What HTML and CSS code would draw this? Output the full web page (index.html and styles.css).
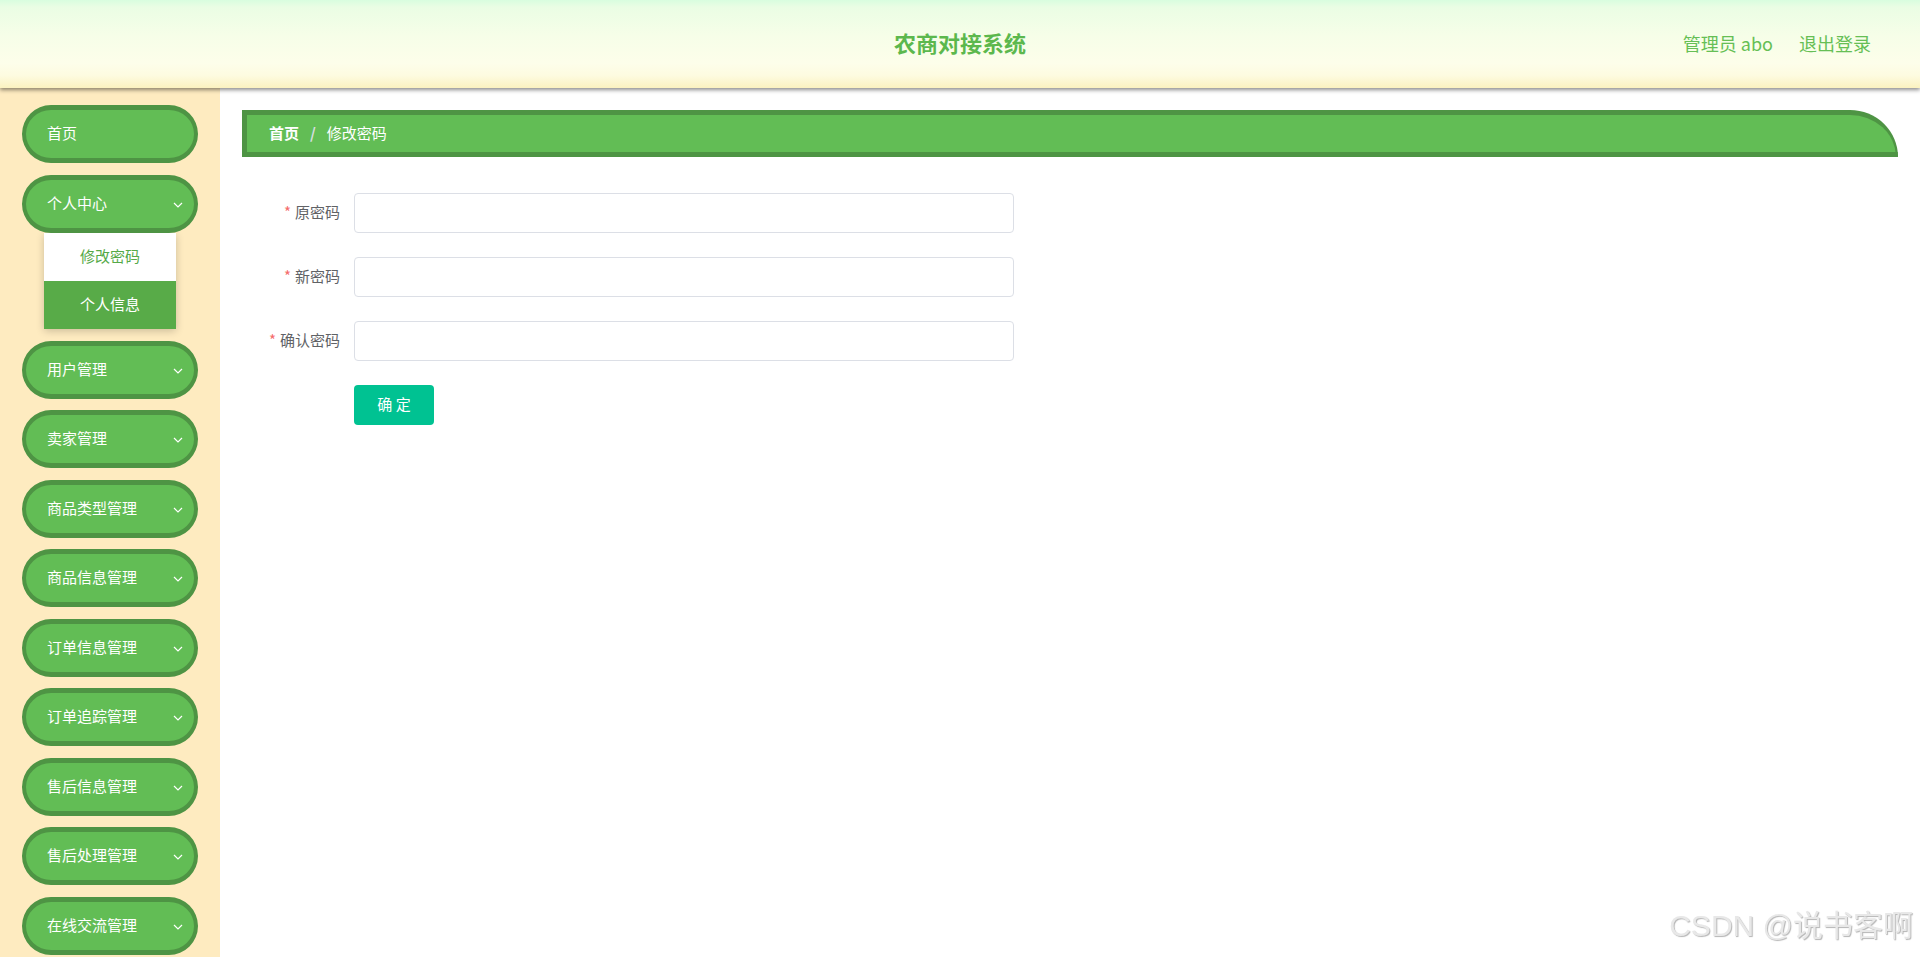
FILE: index.html
```html
<!DOCTYPE html>
<html lang="zh-CN">
<head>
  <meta charset="UTF-8">
  <meta name="viewport" content="width=device-width, initial-scale=1.0">
  <title>农商对接系统</title>
  <link rel="stylesheet" href="styles.css">
</head>
<body>
  <header class="topbar">
    <div></div>
    <h1 class="topbar-title">农商对接系统</h1>
    <div class="topbar-user">
      <span>管理员 abo</span>
      <span class="logout">退出登录</span>
    </div>
  </header>

  <div class="layout">
    <!-- Side menu -->
    <aside class="sidebar">
      <div class="menu-btn">首页</div>

      <div class="menu-btn">个人中心
        <svg class="arrow" viewBox="0 0 10 6"><polyline points="1,1 5,5 9,1"/></svg>
      </div>
      <div class="submenu">
        <div class="submenu-item active">修改密码</div>
        <div class="submenu-item">个人信息</div>
      </div>

      <div class="menu-btn">用户管理
        <svg class="arrow" viewBox="0 0 10 6"><polyline points="1,1 5,5 9,1"/></svg>
      </div>
      <div class="menu-btn">卖家管理
        <svg class="arrow" viewBox="0 0 10 6"><polyline points="1,1 5,5 9,1"/></svg>
      </div>
      <div class="menu-btn">商品类型管理
        <svg class="arrow" viewBox="0 0 10 6"><polyline points="1,1 5,5 9,1"/></svg>
      </div>
      <div class="menu-btn">商品信息管理
        <svg class="arrow" viewBox="0 0 10 6"><polyline points="1,1 5,5 9,1"/></svg>
      </div>
      <div class="menu-btn">订单信息管理
        <svg class="arrow" viewBox="0 0 10 6"><polyline points="1,1 5,5 9,1"/></svg>
      </div>
      <div class="menu-btn">订单追踪管理
        <svg class="arrow" viewBox="0 0 10 6"><polyline points="1,1 5,5 9,1"/></svg>
      </div>
      <div class="menu-btn">售后信息管理
        <svg class="arrow" viewBox="0 0 10 6"><polyline points="1,1 5,5 9,1"/></svg>
      </div>
      <div class="menu-btn">售后处理管理
        <svg class="arrow" viewBox="0 0 10 6"><polyline points="1,1 5,5 9,1"/></svg>
      </div>
      <div class="menu-btn">在线交流管理
        <svg class="arrow" viewBox="0 0 10 6"><polyline points="1,1 5,5 9,1"/></svg>
      </div>
    </aside>

    <!-- Main content -->
    <main class="content">
      <div class="breadcrumb">
        <span class="crumb-home">首页</span>
        <span class="crumb-sep">/</span>
        <span class="crumb-current">修改密码</span>
      </div>

      <form class="pwd-form">
        <div class="form-item">
          <label class="form-label"><span class="required">*</span>原密码</label>
          <input class="form-input" type="password">
        </div>
        <div class="form-item">
          <label class="form-label"><span class="required">*</span>新密码</label>
          <input class="form-input" type="password">
        </div>
        <div class="form-item">
          <label class="form-label"><span class="required">*</span>确认密码</label>
          <input class="form-input" type="password">
        </div>
        <div class="form-actions">
          <button class="submit-btn" type="button">确 定</button>
        </div>
      </form>
    </main>
  </div>

  <div class="watermark">CSDN @说书客啊</div>
</body>
</html>
```

FILE: styles.css
```css
/* Global Styles */
body {
  font-family: "Noto Sans CJK SC", "Liberation Sans", sans-serif;
  margin: 0;
  padding: 0;
  background: #fff;
}

/* Header Styles */
.topbar {
  position: relative;
  z-index: 2;
  height: 88px;
  display: grid;
  grid-template-columns: 1fr auto 1fr;
  align-items: center;
  background: linear-gradient(to bottom, #d8fddf 0%, #eafde4 8%, #f6fee8 40%, #fdfeea 72%, #fdfbe0 86%, #fbf2c0 100%);
  box-shadow: 0 2px 4px rgba(0, 0, 0, 0.45);
}

.topbar-title {
  margin: -5px 0 0;
  font-size: 22px;
  font-weight: bold;
  color: #5cb84d;
}

.topbar-user {
  justify-self: end;
  display: flex;
  gap: 26px;
  padding-right: 49px;
  margin-top: -3px;
  font-size: 18px;
  color: #66bf55;
}

/* Layout */
.layout {
  display: flex;
  min-height: calc(100vh - 88px);
}

.sidebar {
  width: 220px;
  flex-shrink: 0;
  background-color: #feebc0;
  padding-top: 17px;
  box-sizing: border-box;
}

.menu-btn {
  position: relative;
  width: 176px;
  height: 58px;
  margin: 0 0 11.5px 22px;
  box-sizing: border-box;
  border: 5px solid #4e9444;
  border-left-width: 4px;
  border-right-width: 4px;
  border-radius: 29px;
  background-color: #62bd55;
  color: #fff;
  font-size: 15px;
  display: flex;
  align-items: center;
  padding: 0 0 3px 21px;
}

.menu-btn .arrow {
  position: absolute;
  right: 11px;
  top: 22px;
  width: 10px;
  height: 6px;
  fill: none;
  stroke: #fff;
  stroke-width: 1.2;
}

.submenu {
  width: 132px;
  margin: -11.5px 0 12px 44px;
  background: #fff;
  box-shadow: 0 2px 8px rgba(0, 0, 0, 0.2);
}

.submenu-item {
  height: 48px;
  line-height: 46px;
  text-align: center;
  font-size: 15px;
  background-color: #58ab48;
  color: #fff;
}

.submenu-item.active {
  background-color: #fff;
  color: #55a948;
}

/* Main Content Styles */
.content {
  flex: 1;
  padding: 22px 22px 0 22px;
}

.breadcrumb {
  height: 47px;
  box-sizing: border-box;
  border-style: solid;
  border-color: #4e9444;
  border-width: 5px 2px 5px 5px;
  border-top-right-radius: 48px 47px;
  background-color: #62bd55;
  display: flex;
  align-items: center;
  padding: 0 0 3px 22px;
  font-size: 15px;
  color: #fff;
}

.crumb-home {
  font-weight: bold;
}

.crumb-sep {
  margin: 0 11px;
  color: #d8dde2;
  font-weight: bold;
}

.pwd-form {
  padding-top: 36px;
}

.form-item {
  display: flex;
  align-items: center;
  margin-bottom: 24px;
}

.form-label {
  width: 112px;
  box-sizing: border-box;
  padding: 0 14px 4px 0;
  text-align: right;
  font-size: 15px;
  color: #606266;
}

.required {
  color: #f56c6c;
  margin-right: 4px;
}

.form-input {
  width: 660px;
  height: 40px;
  box-sizing: border-box;
  border: 1px solid #dcdfe6;
  border-radius: 4px;
  padding: 0 15px;
  outline: none;
}

.form-actions {
  padding-left: 112px;
}

.submit-btn {
  width: 80px;
  height: 40px;
  border: none;
  border-radius: 4px;
  background-color: #00c292;
  color: #fff;
  font-family: inherit;
  font-size: 15px;
  padding: 0 0 3px;
  cursor: pointer;
}

.watermark {
  position: fixed;
  right: 7px;
  bottom: 12px;
  font-family: "Liberation Sans", "Noto Sans CJK SC", sans-serif;
  font-size: 30px;
  color: #e8e8e8;
  text-shadow: 1px 1px 1px #b5b5b5;
}
```
